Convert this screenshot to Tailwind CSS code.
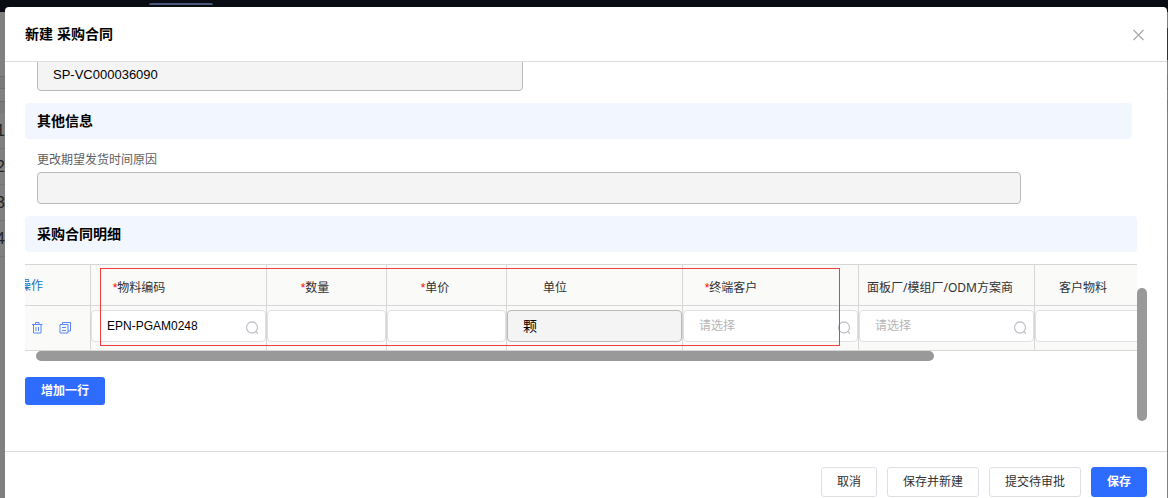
<!DOCTYPE html>
<html lang="zh-CN">
<head>
  <meta charset="UTF-8">
  <meta name="viewport" content="width=device-width, initial-scale=1.0">
  <title>新建 采购合同</title>
  <script src="https://cdn.jsdelivr.net/npm/@tailwindcss/browser@4"></script>
</head>
<body class="relative h-screen overflow-hidden bg-[#808080] text-xs text-[#303133] font-['Liberation_Sans','Noto_Sans_CJK_SC',sans-serif]">
  <!-- Página de fondo atenuada -->
  <div class="flex h-full flex-col" aria-hidden="true">
    <div class="h-3 shrink-0 bg-[#0a0c14] pl-[149px] pt-[3px]">
      <div class="h-[2px] w-16 rounded-t bg-[#4b587a]"></div>
    </div>
    <div class="flex h-[65px] shrink-0 justify-end border-b border-[#6c6c6c] pt-4">
      <div class="h-8 w-2 bg-[#16308a]"></div>
    </div>
    <div class="h-3 shrink-0 border-b border-[#6c6c6c] bg-[#7a7a78]"></div>
    <div class="h-[13px] shrink-0 border-b border-[#6c6c6c]"></div>
    <div class="h-[11px] shrink-0 bg-[#7a7a78]"></div>
    <ul class="-ml-1 text-base leading-9 text-[#222]">
      <li class="h-9 border-b border-[#757575]">1</li>
      <li class="h-9 border-b border-[#757575]">2</li>
      <li class="h-9 border-b border-[#757575]">3</li>
      <li class="h-9 border-b border-[#757575]">4</li>
    </ul>
  </div>

  <!-- Diálogo -->
  <div role="dialog" aria-labelledby="titulo" class="absolute bottom-0 left-[5px] right-px top-[7px] flex flex-col rounded-t-sm bg-white">
    <header class="flex h-[55px] shrink-0 items-center justify-between border-b border-[#dcdcdc] px-5">
      <h1 id="titulo" class="text-sm font-bold text-black">新建 采购合同</h1>
      <button type="button" aria-label="关闭" class="grid size-[18px] place-items-center">
        <svg class="size-[18px]" viewBox="0 0 18 18" fill="none" stroke="#a6a8ac" stroke-width="1.2"><path d="M4.500 5l10 10M14.500 5l-10 10"/></svg>
      </button>
    </header>

    <main class="flex min-h-0 flex-1 overflow-hidden px-5">
      <div class="min-w-0 flex-1">
        <div class="-mt-[3px] grid max-w-[996px] grid-cols-2 gap-3 pl-3">
          <input type="text" aria-label="编号" value="SP-VC000036090" disabled class="h-8 rounded border border-[#b9b9b9] bg-[#f4f4f4] px-[15px] pb-0.5 text-[13px] text-black">
        </div>

        <!-- Otra información -->
        <h2 class="mr-[5px] mt-3 h-9 rounded bg-[#f2f7ff] px-3 text-sm font-bold leading-9 text-black">其他信息</h2>
        <div class="mt-[13px] flex max-w-[996px] flex-col gap-1 pl-3">
          <label for="motivo" class="leading-4 text-[#606060]">更改期望发货时间原因</label>
          <input id="motivo" type="text" disabled class="h-8 rounded border border-[#b9b9b9] bg-[#f4f4f4] px-[15px]">
        </div>

        <!-- Detalle del contrato -->
        <h2 class="mt-3 h-9 rounded bg-[#f2f7ff] px-3 text-sm font-bold leading-9 text-black">采购合同明细</h2>
        <div class="relative mt-3 overflow-hidden">
          <table class="-ml-5 w-[1206px] table-fixed border-separate border-spacing-0 border-t border-[#d6d6d6] bg-[#fafaf9]">
            <colgroup>
              <col class="w-[86px]">
              <col class="w-[176px]">
              <col class="w-[120px]">
              <col class="w-[120px]">
              <col class="w-[176px]">
              <col class="w-[176px]">
              <col class="w-[176px]">
              <col class="w-[176px]">
            </colgroup>
            <thead>
              <tr class="h-[41px] text-left leading-4">
                <th class="border-b border-r border-[#d6d6d6] p-0 pl-[14px] pt-0.5 font-normal text-[#1272c4]">操作</th>
                <th class="border-b border-r border-[#d6d6d6] p-0 pt-1.5 font-normal"><div class="w-24 text-center"><span class="text-[#ff0000]">*</span>物料编码</div></th>
                <th class="border-b border-r border-[#d6d6d6] p-0 pt-1.5 font-normal"><div class="w-24 text-center"><span class="text-[#ff0000]">*</span>数量</div></th>
                <th class="border-b border-r border-[#d6d6d6] p-0 pt-1.5 font-normal"><div class="w-24 text-center"><span class="text-[#ff0000]">*</span>单价</div></th>
                <th class="border-b border-r border-[#d6d6d6] p-0 pt-1.5 font-normal"><div class="w-24 text-center">单位</div></th>
                <th class="border-b border-r border-[#d6d6d6] p-0 pt-1.5 font-normal"><div class="w-24 text-center"><span class="text-[#ff0000]">*</span>终端客户</div></th>
                <th class="border-b border-r border-[#d6d6d6] p-0 pt-1.5 font-normal"><div class="whitespace-nowrap px-2 font-['Noto_Sans','Noto_Sans_CJK_SC',sans-serif]">面板厂/模组厂/ODM方案商</div></th>
                <th class="border-b border-r border-[#d6d6d6] p-0 pt-1.5 font-normal"><div class="w-24 text-center">客户物料</div></th>
              </tr>
            </thead>
            <tbody>
              <tr class="h-[45px] align-top">
                <td class="border-b border-r border-[#d6d6d6] p-0 pl-[26px] pt-[15px]">
                  <div class="flex gap-[14px]">
                    <button type="button" aria-label="删除" class="size-[14px]">
                      <svg class="size-[14px]" viewBox="0 0 14 14" fill="none" stroke="#5a86f8"><path d="M1 3.500h10.500M4.500 3.500v-2h3.500v2M2.500 3.500v8.500h7.500v-8.500M5 6v4M7.500 6v4"/></svg>
                    </button>
                    <button type="button" aria-label="复制" class="size-[14px]">
                      <svg class="size-[14px]" viewBox="0 0 14 14" fill="none" stroke="#5a86f8"><path d="M1 3.500h8v8.500h-8zM3.500 3.500v-2h8v8.500h-2.500M3 6.500h4M3 9.500h4"/></svg>
                    </button>
                  </div>
                </td>
                <td class="border-b border-r border-[#d6d6d6] p-0 pt-1">
                  <div class="relative">
                    <input type="text" aria-label="物料编码" value="EPN-PGAM0248" class="block h-8 w-full rounded border border-[#dfe0e3] bg-white pl-[15px] pr-8 text-xs text-black">
                    <svg class="absolute right-1.5 top-2.5 size-4" viewBox="0 0 16 16" fill="none" stroke="#c0c4cc" stroke-width="1.3"><circle cx="8" cy="7.500" r="5.500"/><path d="M11.800 11.500l2.200 2.200"/></svg>
                  </div>
                </td>
                <td class="border-b border-r border-[#d6d6d6] p-0 pt-1"><input type="text" aria-label="数量" class="block h-8 w-full rounded border border-[#dfe0e3] bg-white px-[15px]"></td>
                <td class="border-b border-r border-[#d6d6d6] p-0 pt-1"><input type="text" aria-label="单价" class="block h-8 w-full rounded border border-[#dfe0e3] bg-white px-[15px]"></td>
                <td class="border-b border-r border-[#d6d6d6] p-0 pt-1"><input type="text" aria-label="单位" value="颗" disabled class="block h-8 w-full rounded border border-[#b9b9b9] bg-[#f4f4f4] px-[15px] pb-0.5 text-sm text-black"></td>
                <td class="border-b border-r border-[#d6d6d6] p-0 pt-1">
                  <div class="relative">
                    <input type="text" aria-label="终端客户" placeholder="请选择" class="block h-8 w-full rounded border border-[#dfe0e3] bg-white pl-[15px] pr-8 placeholder:text-[#b5b5b5]">
                    <svg class="absolute right-1.5 top-2.5 size-4" viewBox="0 0 16 16" fill="none" stroke="#c0c4cc" stroke-width="1.3"><circle cx="8" cy="7.500" r="5.500"/><path d="M11.800 11.500l2.200 2.200"/></svg>
                  </div>
                </td>
                <td class="border-b border-r border-[#d6d6d6] p-0 pt-1">
                  <div class="relative">
                    <input type="text" aria-label="面板厂/模组厂/ODM方案商" placeholder="请选择" class="block h-8 w-full rounded border border-[#dfe0e3] bg-white pl-[15px] pr-8 placeholder:text-[#b5b5b5]">
                    <svg class="absolute right-1.5 top-2.5 size-4" viewBox="0 0 16 16" fill="none" stroke="#c0c4cc" stroke-width="1.3"><circle cx="8" cy="7.500" r="5.500"/><path d="M11.800 11.500l2.200 2.200"/></svg>
                  </div>
                </td>
                <td class="border-b border-r border-[#d6d6d6] p-0 pt-1"><input type="text" aria-label="客户物料" class="block h-8 w-full rounded border border-[#dfe0e3] bg-white px-[15px]"></td>
              </tr>
            </tbody>
          </table>
          <!-- Marco rojo sobre los campos obligatorios -->
          <div class="pointer-events-none absolute left-[75px] top-1 h-[78px] w-[740px] border border-[#f23c3c]"></div>
        </div>
        <div class="ml-[11px] h-2.5 w-[898px] rounded-full bg-[#999]"></div>

        <button type="button" class="mt-4 block h-7 rounded-[3px] bg-[#2e6bff] px-4 font-bold text-white">增加一行</button>
      </div>

      <!-- Barra de desplazamiento vertical -->
      <div class="w-2.5 shrink-0 pt-[226px]">
        <div class="h-[133px] rounded-full bg-[#999]"></div>
      </div>
    </main>

    <footer class="flex shrink-0 justify-end gap-2.5 border-t border-[#dcdcdc] px-5 pb-px pt-[15px]">
      <button type="button" class="h-[30px] rounded-[3px] border border-[#dcdfe6] bg-white px-[15px]">取消</button>
      <button type="button" class="h-[30px] rounded-[3px] border border-[#dcdfe6] bg-white px-[15px]">保存并新建</button>
      <button type="button" class="h-[30px] rounded-[3px] border border-[#dcdfe6] bg-white px-[15px]">提交待审批</button>
      <button type="button" class="h-[30px] rounded-[3px] border border-[#2e6bff] bg-[#2e6bff] px-[15px] font-bold text-white">保存</button>
    </footer>
  </div>
</body>
</html>
